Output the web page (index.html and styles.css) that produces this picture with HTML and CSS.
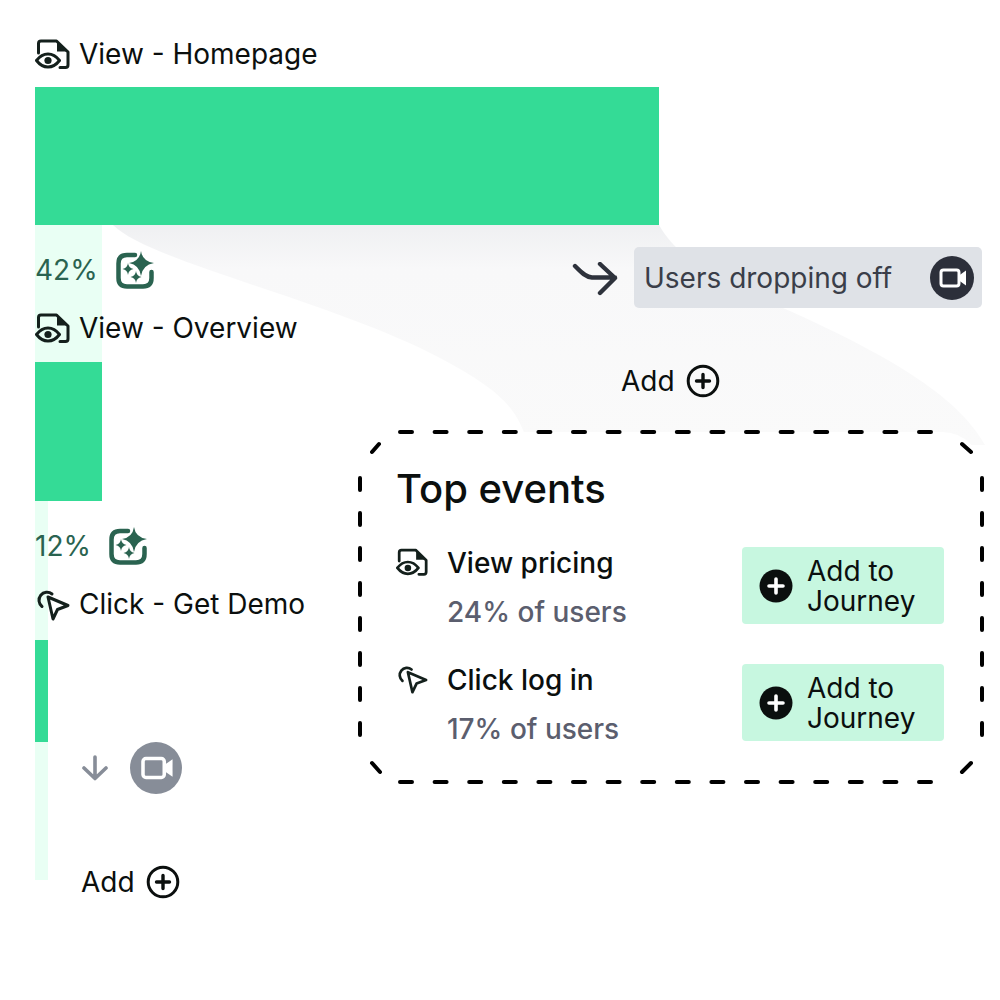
FILE: index.html
```html
<!DOCTYPE html>
<html lang="en">
<head>
    <meta charset="UTF-8">
    <meta name="viewport" content="width=device-width, initial-scale=1.0">
    <title>Journey funnel</title>
    <link rel="stylesheet" href="styles.css">
</head>
<body>
    <!-- shared icons -->
    <svg class="sprite" aria-hidden="true">
        <symbol id="iconView" viewBox="0 0 35 30">
            <path d="M3.5 14V4.5Q3.5 2 6 2H21.5L33 13V26Q33 28.5 30.5 28.5H25" fill="none" stroke="currentColor" stroke-width="3" stroke-linecap="round" stroke-linejoin="round"/>
            <path d="M22 2.5V12.5H32.5Z" fill="currentColor"/>
            <path d="M1.5 21.5Q6.5 15 13 15Q19.5 15 24.5 21.5Q19.5 28 13 28Q6.5 28 1.5 21.5Z" fill="none" stroke="currentColor" stroke-width="3" stroke-linejoin="round"/>
            <circle cx="13" cy="21.5" r="3.6" fill="currentColor"/>
        </symbol>
        <symbol id="iconClick" viewBox="0 0 35 33">
            <path d="M7 18.5A8 8 0 1 1 17 6" fill="none" stroke="currentColor" stroke-width="3" stroke-linecap="round"/>
            <path d="M13 9L33 17.5L22.5 21.5L18 31Z" fill="none" stroke="currentColor" stroke-width="3" stroke-linejoin="round"/>
        </symbol>
        <symbol id="iconSpark" viewBox="0 0 38 38">
            <path d="M19 4H11Q2.5 4 2.5 12.5V27Q2.5 35.5 11 35.5H27Q35.5 35.5 35.5 27V21" fill="none" stroke="currentColor" stroke-width="4.5" stroke-linecap="round"/>
            <path d="M25 0Q26.5 10.5 38 12Q26.5 14 25 25Q23.5 14 13 12Q23.5 10.5 25 0Z" fill="currentColor"/>
            <path d="M12 12Q12.5 17 17.5 18Q12.5 19 12 24Q11.5 19 6.5 18Q11.5 17 12 12Z" fill="currentColor"/>
            <path d="M20 20Q20.5 25 25.5 26Q20.5 27 20 32Q19.5 27 14.5 26Q19.5 25 20 20Z" fill="currentColor"/>
        </symbol>
        <symbol id="iconCamera" viewBox="0 0 44 44">
            <rect x="11" y="14" width="18" height="16" rx="2.5" fill="none" stroke="currentColor" stroke-width="3"/>
            <path d="M29 19.5L36 14.5V29.5L29 24.5" fill="currentColor"/>
        </symbol>
        <symbol id="iconAdd" viewBox="0 0 34 34">
            <circle cx="17" cy="17" r="14.8" fill="none" stroke="currentColor" stroke-width="3"/>
            <path d="M17 10.5V23.5M10.5 17H23.5" fill="none" stroke="currentColor" stroke-width="3.4" stroke-linecap="round"/>
        </symbol>
        <symbol id="iconAddSolid" viewBox="0 0 34 34">
            <circle cx="17" cy="17" r="16.5" fill="currentColor"/>
            <path d="M17 10V24M10 17H24" fill="none" stroke="#fff" stroke-width="3.6" stroke-linecap="round"/>
        </symbol>
    </svg>

    <main class="funnel">
        <!-- grey band for the users who leave after step 1 -->
        <svg class="drop-band" viewBox="0 0 1000 1000" aria-hidden="true">
            <defs>
                <linearGradient id="bandFill" x1="0" y1="0" x2="0" y2="1">
                    <stop offset="0" stop-color="#eff0f2"/>
                    <stop offset="0.2" stop-color="#f8f8f9"/>
                    <stop offset="1" stop-color="#fafafa"/>
                </linearGradient>
            </defs>
            <path d="M113 225C150 262 330 300 440 358C500 390 518 408 528 445H985C960 400 900 360 783 308C720 278 680 262 659 225Z" fill="url(#bandFill)"/>
        </svg>

        <section class="steps">
            <div class="event event--first">
                <svg class="event-icon"><use href="#iconView"/></svg>
                <span>View - Homepage</span>
            </div>
            <div class="bar bar--wide"></div>

            <div class="track track--mid">
                <div class="rate">
                    <span>42%</span>
                    <svg class="spark"><use href="#iconSpark"/></svg>
                </div>
                <div class="event">
                    <svg class="event-icon"><use href="#iconView"/></svg>
                    <span>View - Overview</span>
                </div>
            </div>
            <div class="bar bar--mid"></div>

            <div class="track track--low">
                <div class="rate">
                    <span>12%</span>
                    <svg class="spark"><use href="#iconSpark"/></svg>
                </div>
                <div class="event">
                    <svg class="event-icon event-icon--click"><use href="#iconClick"/></svg>
                    <span>Click - Get Demo</span>
                </div>
            </div>
            <div class="bar bar--low"></div>

            <div class="track track--tail">
                <div class="replay">
                    <svg class="replay-arrow" viewBox="0 0 28 26">
                        <path d="M14 2V23M3 13L14 23.5L25 13" fill="none" stroke="currentColor" stroke-width="3.6" stroke-linecap="round" stroke-linejoin="round"/>
                    </svg>
                    <span class="replay-cam"><svg><use href="#iconCamera"/></svg></span>
                </div>
                <div class="add add--tail">
                    <span>Add</span>
                    <svg class="add-icon"><use href="#iconAdd"/></svg>
                </div>
            </div>
        </section>

        <svg class="drop-arrow" viewBox="0 0 48 36" aria-hidden="true">
            <path d="M3 4C8 9 13 15 20 15.500H43M28 2L43 16L28 31" fill="none" stroke="currentColor" stroke-width="4.400" stroke-linecap="round" stroke-linejoin="round"/>
        </svg>
        <div class="drop-chip">
            <span>Users dropping off</span>
            <span class="drop-cam"><svg><use href="#iconCamera"/></svg></span>
        </div>
        <div class="add add--drop">
            <span>Add</span>
            <svg class="add-icon"><use href="#iconAdd"/></svg>
        </div>

        <section class="top-events">
            <svg class="dashes" viewBox="0 0 640 370" aria-hidden="true">
                <path d="M50 10H592M50 360H592" stroke-dasharray="12 22.6"/>
                <path d="M10 56V330M632 56V330" stroke-dasharray="12 23" transform="translate(0 0)"/>
                <path d="M22 30L29 22M612 22L621 30M22 341L30 350M612 350L621 341"/>
            </svg>
            <h2>Top events</h2>
            <div class="event-rows">
                <div class="event-row">
                    <svg class="row-icon"><use href="#iconView"/></svg>
                    <div class="row-text">
                        <div class="row-name">View pricing</div>
                        <div class="row-share">24% of users</div>
                    </div>
                    <button class="add-journey">
                        <svg><use href="#iconAddSolid"/></svg>
                        <span>Add to<br>Journey</span>
                    </button>
                </div>
                <div class="event-row">
                    <svg class="row-icon"><use href="#iconClick"/></svg>
                    <div class="row-text">
                        <div class="row-name">Click log in</div>
                        <div class="row-share">17% of users</div>
                    </div>
                    <button class="add-journey">
                        <svg><use href="#iconAddSolid"/></svg>
                        <span>Add to<br>Journey</span>
                    </button>
                </div>
            </div>
        </section>
    </main>
</body>
</html>
```

FILE: styles.css
```css
* {
    box-sizing: border-box;
}

body {
    margin: 0;
    background: #fff;
    color: #0b0f0e;
    font-family: Inter, "Liberation Sans", sans-serif;
    font-size: 28px;
}

.sprite {
    display: none;
}

.funnel {
    position: relative;
    width: 1000px;
    height: 1000px;
    overflow: hidden;
}

.drop-band {
    position: absolute;
    top: 0;
    left: 0;
    width: 1000px;
    height: 1000px;
}

/* left column */
.steps {
    position: relative;
    padding: 39px 0 0 35px;
}

.event {
    display: flex;
    align-items: center;
    gap: 9px;
    height: 30px;
    margin-top: 24px;
    white-space: nowrap;
}

.event--first {
    margin: 0 0 18px;
}

.event-icon {
    flex: none;
    width: 35px;
    height: 30px;
    color: #14201c;
}

.event-icon--click {
    height: 33px;
}

.bar {
    background: #34db96;
}

.bar--wide {
    width: 624px;
    height: 138px;
}

.bar--mid {
    width: 67px;
    height: 139px;
}

.bar--low {
    width: 13px;
    height: 139px;
}

.track {
    background: #e9fff4;
    padding-top: 26px;
}

.track--mid {
    width: 67px;
    height: 137px;
}

.track--low {
    width: 13px;
    height: 139px;
}

.track--tail {
    width: 13px;
    height: 138px;
    padding-top: 0;
}

.rate {
    display: flex;
    align-items: center;
    gap: 18px;
    height: 38px;
    color: #2a6350;
    white-space: nowrap;
}

.spark {
    flex: none;
    width: 38px;
    height: 38px;
}

.replay {
    display: flex;
    align-items: center;
    gap: 21px;
    width: max-content;
    margin: -37px 0 0 46px;
    color: #878d98;
}

.replay-arrow {
    width: 28px;
    height: 26px;
}

.replay-cam,
.drop-cam {
    display: flex;
    align-items: center;
    justify-content: center;
    border-radius: 50%;
    color: #fff;
}

.replay-cam {
    width: 52px;
    height: 52px;
    background: #878d98;
}

.replay-cam svg {
    width: 52px;
    height: 52px;
}

.add {
    display: flex;
    align-items: center;
    gap: 11px;
    width: max-content;
    height: 34px;
    white-space: nowrap;
}

.add--tail {
    margin: 71px 0 0 46px;
}

.add-icon {
    width: 34px;
    height: 34px;
}

/* drop off callout */
.drop-arrow {
    position: absolute;
    top: 262px;
    left: 572px;
    width: 48px;
    height: 36px;
    color: #2e323c;
}

.drop-chip {
    position: absolute;
    top: 247px;
    left: 634px;
    display: flex;
    align-items: center;
    justify-content: space-between;
    width: 348px;
    height: 61px;
    padding: 0 8px 0 10px;
    border-radius: 5px;
    background: #dfe2e7;
    color: #3a3e49;
}

.drop-cam {
    width: 44px;
    height: 44px;
    background: #2c2f3a;
}

.drop-cam svg {
    width: 44px;
    height: 44px;
}

.add--drop {
    position: absolute;
    top: 364px;
    left: 621px;
}

/* top events card */
.top-events {
    position: absolute;
    top: 432px;
    left: 360px;
    width: 622px;
    height: 350px;
    padding: 33px 38px 0 36px;
    border-radius: 40px;
    background: #fff;
}

.dashes {
    position: absolute;
    top: -10px;
    left: -10px;
    width: 640px;
    height: 370px;
    fill: none;
    stroke: #000;
    stroke-width: 4;
    stroke-linecap: round;
}

.top-events h2 {
    position: relative;
    margin: 0 0 34px;
    font-size: 40px;
    font-weight: 500;
    line-height: 48px;
}

.event-rows {
    position: relative;
    display: grid;
    gap: 40px;
}

.event-row {
    display: flex;
    align-items: flex-start;
    height: 77px;
}

.row-icon {
    flex: none;
    width: 32px;
    height: 30px;
    margin-right: 19px;
    color: #14201c;
}

.row-text {
    flex: 1;
    margin-top: 1px;
}

.row-name {
    line-height: 30px;
    font-weight: 500;
}

.row-share {
    margin-top: 19px;
    line-height: 30px;
    color: #5b5e6e;
    font-weight: 500;
}

.add-journey {
    display: flex;
    align-items: center;
    gap: 14px;
    width: 202px;
    height: 77px;
    padding: 0 0 0 17px;
    border: 0;
    border-radius: 4px;
    background: #c7f7e0;
    color: #0b0f0e;
    font: inherit;
    line-height: 30px;
    text-align: left;
}

.add-journey svg {
    flex: none;
    width: 34px;
    height: 34px;
}
```
